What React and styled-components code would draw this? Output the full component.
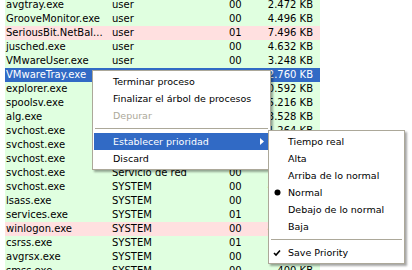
import styled, { createGlobalStyle } from 'styled-components';

const GlobalStyle = createGlobalStyle`
  html, body {
    margin: 0;
    padding: 0;
    background: #ffffff;
    overflow: hidden;
  }
`;

const processes = [
  { name: 'avgtray.exe', user: 'user', prio: '00', mem: '2.472 KB' },
  { name: 'GrooveMonitor.exe', user: 'user', prio: '00', mem: '4.496 KB' },
  { name: 'SeriousBit.NetBal...', user: 'user', prio: '01', mem: '7.496 KB', tone: 'pink' },
  { name: 'jusched.exe', user: 'user', prio: '00', mem: '4.632 KB' },
  { name: 'VMwareUser.exe', user: 'user', prio: '00', mem: '3.248 KB' },
  { name: 'VMwareTray.exe', user: 'user', prio: '00', mem: '2.760 KB', tone: 'selected' },
  { name: 'explorer.exe', user: 'user', prio: '00', mem: '20.592 KB' },
  { name: 'spoolsv.exe', user: 'SYSTEM', prio: '00', mem: '5.216 KB' },
  { name: 'alg.exe', user: 'Servicio local', prio: '00', mem: '3.528 KB' },
  { name: 'svchost.exe', user: 'Servicio local', prio: '00', mem: '1.264 KB' },
  { name: 'svchost.exe', user: 'Servicio de red', prio: '00', mem: '4.108 KB' },
  { name: 'svchost.exe', user: 'SYSTEM', prio: '00', mem: '19.804 KB' },
  { name: 'svchost.exe', user: 'Servicio de red', prio: '00', mem: '3.620 KB' },
  { name: 'svchost.exe', user: 'SYSTEM', prio: '00', mem: '4.932 KB' },
  { name: 'lsass.exe', user: 'SYSTEM', prio: '00', mem: '1.212 KB' },
  { name: 'services.exe', user: 'SYSTEM', prio: '01', mem: '3.448 KB' },
  { name: 'winlogon.exe', user: 'SYSTEM', prio: '00', mem: '4.640 KB', tone: 'pink' },
  { name: 'csrss.exe', user: 'SYSTEM', prio: '01', mem: '3.816 KB' },
  { name: 'avgrsx.exe', user: 'SYSTEM', prio: '00', mem: '1.044 KB' },
  { name: 'smss.exe', user: 'SYSTEM', prio: '00', mem: '400 KB' },
];

const priorities = [
  'Tiempo real',
  'Alta',
  'Arriba de lo normal',
  'Normal',
  'Debajo de lo normal',
  'Baja',
];

const rowColors = {
  green: '#e0ffe0',
  pink: '#ffe0e0',
  selected: '#316ac5',
};

const Screen = styled.div`
  position: relative;
  width: 412px;
  height: 270px;
  overflow: hidden;
  background: #ffffff;
  font-family: 'DejaVu Sans', 'Liberation Sans', sans-serif;
  color: #000000;
`;

const List = styled.div`
  width: 315px;
  margin: -2px 0 0 5px;
  display: flex;
  flex-direction: column;
  font-size: 10px;
`;

const Row = styled.div`
  display: grid;
  grid-template-columns: 107px 117px 30px 1fr;
  height: 14px;
  line-height: 14px;
  background: ${(p) => rowColors[p.$tone || 'green']};
  color: ${(p) => (p.$tone === 'selected' ? '#ffffff' : '#000000')};
  white-space: nowrap;
`;

const Cell = styled.div`
  overflow: hidden;
  padding-left: ${(p) => (p.$first ? '1px' : '0')};
  padding-right: ${(p) => (p.$right ? '7px' : '0')};
  text-align: ${(p) => (p.$right ? 'right' : 'left')};
`;

const Menu = styled.div`
  position: absolute;
  left: ${(p) => p.$left}px;
  top: ${(p) => p.$top}px;
  width: ${(p) => p.$width}px;
  box-sizing: border-box;
  background: #ffffff;
  border: 1px solid #aca899;
  padding: 2px 1px;
  box-shadow: 2px 2px 2px rgba(0, 0, 0, 0.35);
  display: flex;
  flex-direction: column;
  font-size: 9.5px;
`;

const Item = styled.div`
  position: relative;
  height: 17px;
  line-height: 17px;
  padding-left: ${(p) => p.$indent}px;
  background: ${(p) => (p.$active ? '#316ac5' : 'transparent')};
  color: ${(p) => (p.$active ? '#ffffff' : p.$disabled ? '#aca899' : '#000000')};
  white-space: nowrap;
`;

const Separator = styled.div`
  height: 9px;
  display: flex;
  align-items: center;
  padding: 0 1px;

  &::after {
    content: '';
    flex: 1;
    height: 1px;
    background: #aca899;
  }
`;

const Mark = styled.svg`
  position: absolute;
  left: ${(p) => p.$x}px;
  top: ${(p) => p.$y}px;
`;

function Bullet() {
  return (
    <Mark $x={4} $y={5} width="7" height="7" viewBox="0 0 7 7">
      <circle cx="3.5" cy="3.5" r="3" fill="#000000" />
    </Mark>
  );
}

function Check() {
  return (
    <Mark $x={3} $y={5} width="8" height="8" viewBox="0 0 8 8">
      <path d="M1 4 L3 6 L7 1.5" fill="none" stroke="#000000" strokeWidth="1.6" />
    </Mark>
  );
}

function Arrow() {
  return (
    <Mark $x={166} $y={5} width="4" height="7" viewBox="0 0 4 7">
      <path d="M0 0 L4 3.5 L0 7 Z" fill="#ffffff" />
    </Mark>
  );
}

export default function App() {
  return (
    <Screen>
      <GlobalStyle />
      <List>
        {processes.map((p, i) => (
          <Row key={i} $tone={p.tone}>
            <Cell $first>{p.name}</Cell>
            <Cell>{p.user}</Cell>
            <Cell>{p.prio}</Cell>
            <Cell $right>{p.mem}</Cell>
          </Row>
        ))}
      </List>

      <Menu $left={92} $top={70} $width={179}>
        <Item $indent={19}>Terminar proceso</Item>
        <Item $indent={19}>Finalizar el árbol de procesos</Item>
        <Item $indent={19} $disabled>Depurar</Item>
        <Separator />
        <Item $indent={19} $active>
          Establecer prioridad
          <Arrow />
        </Item>
        <Item $indent={19}>Discard</Item>
      </Menu>

      <Menu $left={268} $top={130} $width={137}>
        {priorities.map((label) => (
          <Item key={label} $indent={18}>
            {label === 'Normal' && <Bullet />}
            {label}
          </Item>
        ))}
        <Separator />
        <Item $indent={18}>
          <Check />
          Save Priority
        </Item>
      </Menu>
    </Screen>
  );
}
